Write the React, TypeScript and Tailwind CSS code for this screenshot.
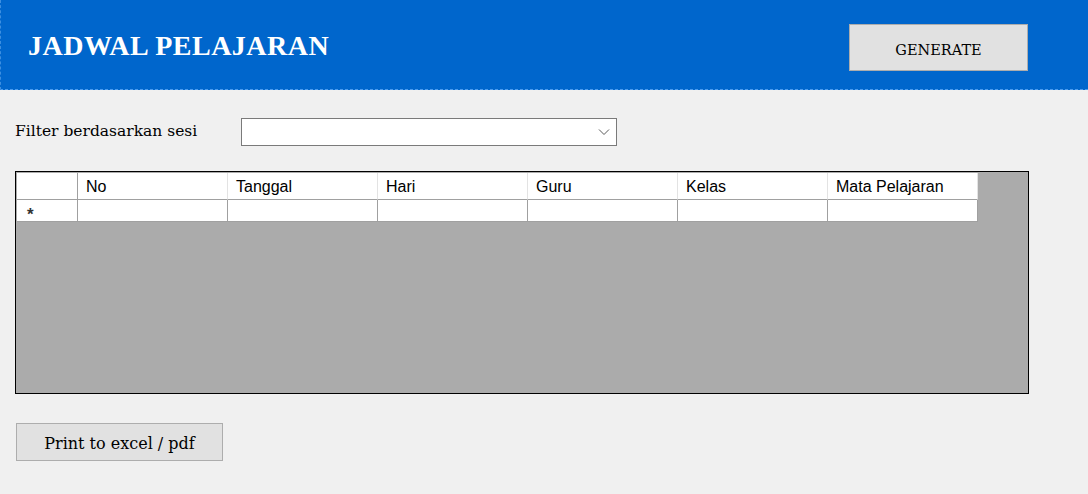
const serif = "font-['Liberation_Serif',serif]";
const wideSerif = "font-['DejaVu_Serif',serif]";
const sans = "font-['Liberation_Sans',Arial,sans-serif]";

const columns = ["No", "Tanggal", "Hari", "Guru", "Kelas", "Mata Pelajaran"];

export default function App() {
  return (
    <div className="w-[1088px] h-[494px] bg-[#f0f0f0] overflow-hidden">
      <header className="h-[90px] bg-[#0066cc] border-l border-b border-dashed border-l-[#3d8fe0] border-b-[#4a9bef] flex items-center justify-between pl-[27px] pr-[60px]">
        <h1 className={`${serif} text-white font-bold text-[28px] tracking-[0.5px] mt-[3px]`}>
          JADWAL PELAJARAN
        </h1>
        <button className={`${wideSerif} w-[179px] h-[47px] bg-[#e1e1e1] border border-[#adadad] text-[14.5px] text-black mt-[6px] pt-[6px]`}>
          GENERATE
        </button>
      </header>

      <div className="pl-[15px] pt-[28px]">
        <div className="flex items-center h-[28px]">
          <span className={`${wideSerif} w-[226px] text-[15.5px] text-black`}>
            Filter berdasarkan sesi
          </span>
          <div className="w-[376px] h-[28px] bg-white border border-[#7a7a7a] flex items-center justify-end pr-[6px]">
            <svg width="12" height="8" viewBox="0 0 12 8" fill="none">
              <path d="M1 1.5L6 6.5L11 1.5" stroke="#5a5a5a" strokeWidth="1" />
            </svg>
          </div>
        </div>

        <div className="mt-[25px] w-[1014px] h-[223px] bg-[#ababab] border border-black pt-px pl-px">
          <div className={`${sans} flex w-[961px] bg-white text-[16px] text-black`}>
            <div className="w-[61px] h-[27px] border-r border-b border-[#a0a0a0]" />
            {columns.map((c) => (
              <div
                key={c}
                className="w-[150px] h-[27px] pl-[8px] pt-[2px] flex items-center border-r border-r-[#e3e3e3] border-b border-b-[#a0a0a0]"
              >
                {c}
              </div>
            ))}
          </div>
          <div className="flex w-[961px] bg-white">
            <div className="w-[61px] h-[22px] border-r border-b border-[#a0a0a0] pl-[10px] flex items-center">
              <span className={`${sans} text-[17px] font-bold text-[#333] mt-[9px]`}>*</span>
            </div>
            {columns.map((c) => (
              <div key={c} className="w-[150px] h-[22px] border-r border-b border-[#a0a0a0]" />
            ))}
          </div>
        </div>

        <button className={`${wideSerif} mt-[29px] ml-px w-[207px] h-[38px] bg-[#e1e1e1] border border-[#adadad] text-[16px] text-black pt-[4px]`}>
          Print to excel / pdf
        </button>
      </div>
    </div>
  );
}
